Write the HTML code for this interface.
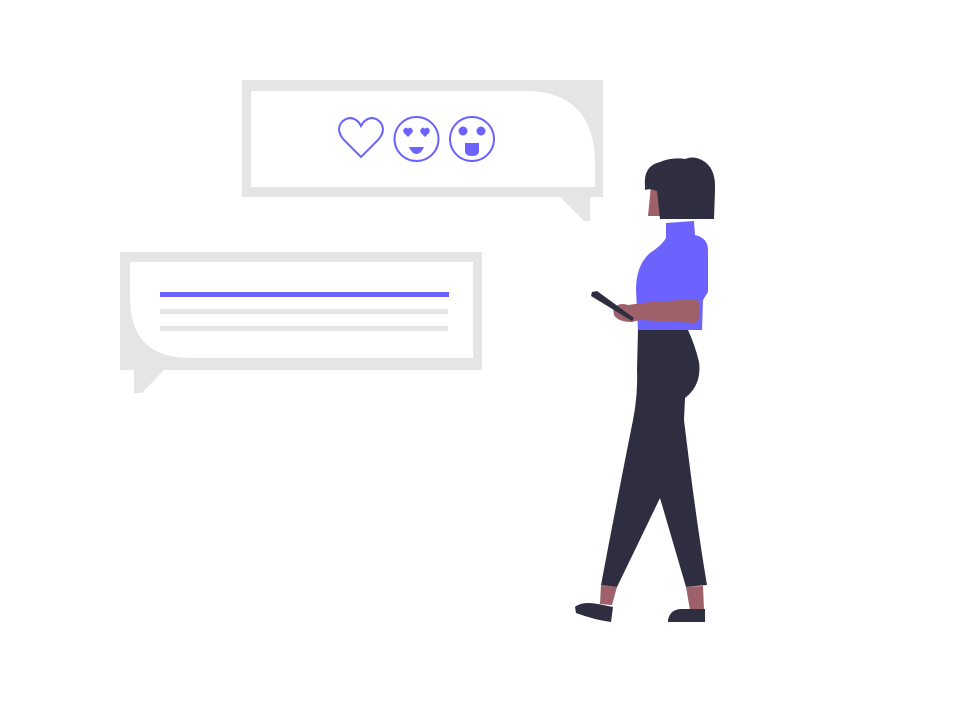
<!DOCTYPE html>
<html><head><style>html,body{margin:0;background:#fff}svg{display:block}</style></head><body>
<svg width="973" height="706" viewBox="0 0 973 706" xmlns="http://www.w3.org/2000/svg">
<rect x="242" y="80" width="361" height="117" fill="#e5e5e5"/>
<path d="M251 91 H525 Q595 91 595 165 V187 H251 Z" fill="#fff"/>
<path d="M560 197 H590 V221 H584 Z" fill="#e5e5e5"/>
<g fill="none" stroke="#6c63ff" stroke-width="2">
<path d="M361 157 L344 140 Q336 131 341 123 Q348 115 356 120 Q359 122 361 126 Q363 122 366 120 Q374 115 381 123 Q386 131 378 140 Z"/>
<circle cx="416.5" cy="139" r="22"/>
<circle cx="472" cy="139" r="22"/>
</g>
<g fill="#6c63ff">
<path d="M408 137 l-4-4 q-2-3 1-5 q2-1 3 1 q1-2 3-1 q3 2 1 5 z"/>
<path d="M425 137 l-4-4 q-2-3 1-5 q2-1 3 1 q1-2 3-1 q3 2 1 5 z"/>
<path d="M409 147 H424 Q421 154 416.5 154 Q412 154 409 147 Z"/>
<circle cx="463" cy="131" r="4.5"/><circle cx="481" cy="131" r="4.5"/>
<path d="M465 143 H479 V151 Q479 156 472 156 Q465 156 465 151 Z"/>
</g>
<rect x="120" y="252" width="362" height="118" fill="#e5e5e5"/>
<path d="M130 262 H473 V358 H190 Q130 358 130 298 Z" fill="#fff"/>
<path d="M134 370 H164 L142 393 H134 Z" fill="#e5e5e5"/>
<rect x="160" y="292" width="289" height="5" fill="#6c63ff"/>
<rect x="160" y="309" width="288" height="5" fill="#e5e5e5"/>
<rect x="160" y="326" width="288" height="5" fill="#e5e5e5"/>
<path d="M651 185 L648 216 L664 216 L664 195 Z" fill="#9e616a"/>
<path d="M645 186 Q643 166 660 162 Q672 157 685 159 Q695 155 705 162 Q716 170 715 190 L714 219 H660 L657 191 Q650 188 645 190 Z" fill="#2f2e41"/>
<path d="M666 223 L694 221 L695 235 Q708 238 708 250 L708 292 L703 300 L702 330 H638 L636 290 Q636 265 650 253 Q662 245 666 238 Z" fill="#6c63ff"/>
<path d="M613 308 Q620 302 628 305 L650 302 L698 299 Q702 318 696 323 L640 320 L632 322 Q618 322 614 315 Z" fill="#9e616a"/>
<path d="M592 292 L597 291 L634 318 L632 321 L591 296 Z" fill="#2f2e41"/>
<path d="M638 330 H688 Q695 345 699 362 Q702 385 685 398 L684 420 Q696 520 707 585 L686 587 L660 498 Q635 550 617 587 L601 585 Q618 495 633 420 Q638 395 637 370 Z" fill="#2f2e41"/>
<path d="M601 585 L617 587 L612 605 L600 604 Z" fill="#9e616a"/>
<path d="M686 587 L703 586 L704 610 L690 610 Z" fill="#9e616a"/>
<path d="M575 607 Q582 601 598 604 L613 607 L611 622 Q595 620 576 613 Z" fill="#2f2e41"/>
<path d="M668 620 Q670 610 680 609 L705 609 L705 622 H668 Z" fill="#2f2e41"/>
</svg>
</body></html>
